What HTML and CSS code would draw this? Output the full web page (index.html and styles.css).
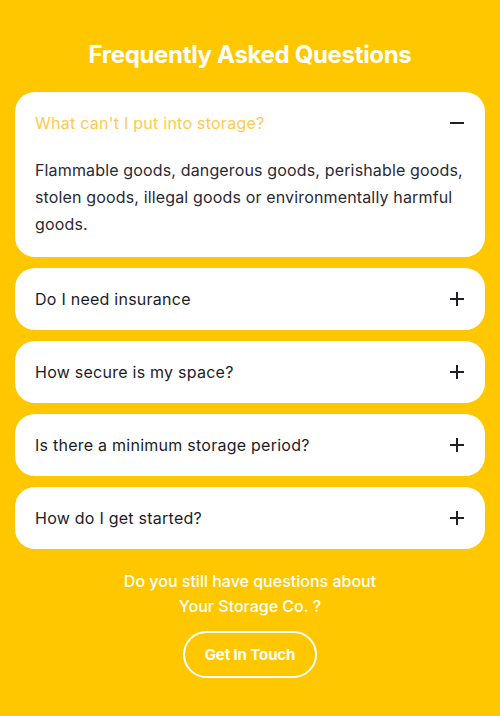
FILE: index.html
```html
<!DOCTYPE html>
<html lang="en">
<head>
<meta charset="utf-8">
<link rel="stylesheet" href="styles.css">
</head>
<body>
<section class="faq">
  <h1 class="title">Frequently Asked Questions</h1>
  <div class="list">
    <div class="item open">
      <div class="q"><span class="q-text">What can't I put into storage?</span><span class="icon minus"></span></div>
      <p class="a">Flammable goods, dangerous goods, perishable goods, stolen goods, illegal goods or environmentally harmful goods.</p>
    </div>
    <div class="item">
      <div class="q"><span class="q-text">Do I need insurance</span><span class="icon plus"></span></div>
    </div>
    <div class="item">
      <div class="q"><span class="q-text">How secure is my space?</span><span class="icon plus"></span></div>
    </div>
    <div class="item">
      <div class="q"><span class="q-text">Is there a minimum storage period?</span><span class="icon plus"></span></div>
    </div>
    <div class="item">
      <div class="q"><span class="q-text">How do I get started?</span><span class="icon plus"></span></div>
    </div>
  </div>
  <p class="more">Do you still have questions about<br>Your Storage Co. ?</p>
  <a class="btn" href="#">Get In Touch</a>
</section>
</body>
</html>
```
FILE: styles.css
```css
html, body {
  margin: 0;
  padding: 0;
  background: #FFC700;
}
body {
  font-family: Inter, "Noto Sans", sans-serif;
  width: 500px;
  height: 716px;
}
.faq {
  display: flex;
  flex-direction: column;
  align-items: center;
  padding: 38px 15px 0;
}
.title {
  margin: 0;
  color: #fff;
  font-size: 24px;
  font-weight: 700;
  letter-spacing: -0.33px;
  line-height: 34px;
}
.list {
  align-self: stretch;
  display: flex;
  flex-direction: column;
  gap: 11px;
  margin-top: 20px;
}
.item {
  background: #fff;
  border-radius: 20px;
}
.q {
  height: 62px;
  display: flex;
  align-items: center;
  justify-content: space-between;
  padding: 0 20px;
}
.q-text {
  font-size: 16px;
  font-weight: 400;
  color: #1c1c28;
  letter-spacing: 0.25px;
}
.open .q-text {
  color: #FFC94F;
}
.icon {
  position: relative;
  width: 14px;
  height: 14px;
  margin-right: 1px;
}
.icon::before, .icon::after {
  content: "";
  position: absolute;
  background: #1f1f2b;
}
.icon::before {
  left: 0; right: 0; top: 6px; height: 2px;
}
.plus::after {
  top: 0; bottom: 0; left: 6px; width: 2px;
}
.a {
  margin: 3px 0 0;
  padding: 0 12px 19px 20px;
  font-size: 16px;
  line-height: 27px;
  color: #2a2a33;
  letter-spacing: 0.15px;
}
.more {
  margin: 20px 0 0;
  text-align: center;
  color: #fff;
  font-size: 16px;
  font-weight: 500;
  line-height: 25px;
  letter-spacing: 0;
}
.btn {
  margin-top: 12px;
  display: flex;
  align-items: center;
  justify-content: center;
  width: 134px;
  height: 47px;
  box-sizing: border-box;
  border: 2px solid #fff;
  border-radius: 24px;
  color: #fff;
  font-size: 15px;
  font-weight: 700;
  text-decoration: none;
  letter-spacing: -0.1px;
}
```
